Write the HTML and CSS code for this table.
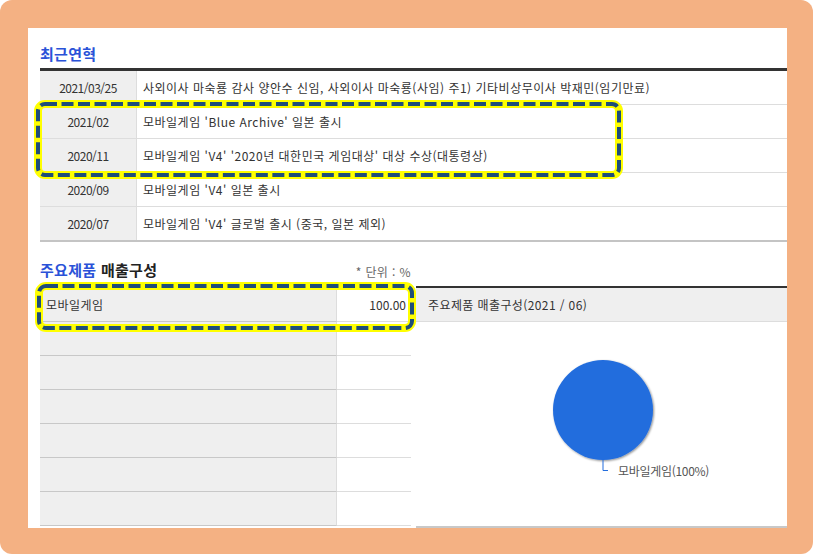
FILE: index.html
```html
<!DOCTYPE html>
<html lang="ko">
<head>
<meta charset="utf-8">
<title>최근연혁</title>
<link rel="stylesheet" href="styles.css">
</head>
<body>
<div class="frame">
  <div class="page">
    <div class="content">
      <h2 class="title">최근연혁</h2>
      <div class="hist">
        <div class="hrow"><div class="date">2021/03/25</div><div class="desc">사외이사 마숙룡 감사 양안수 신임, 사외이사 마숙룡(사임) 주1) 기타비상무이사 박재민(임기만료)</div></div>
        <div class="hrow"><div class="date">2021/02</div><div class="desc">모바일게임 'Blue Archive' 일본 출시</div></div>
        <div class="hrow"><div class="date">2020/11</div><div class="desc">모바일게임 'V4' '2020년 대한민국 게임대상' 대상 수상(대통령상)</div></div>
        <div class="hrow"><div class="date">2020/09</div><div class="desc">모바일게임 'V4' 일본 출시</div></div>
        <div class="hrow last"><div class="date">2020/07</div><div class="desc">모바일게임 'V4' 글로벌 출시 (중국, 일본 제외)</div></div>
      </div>

      <div class="sec2">
        <div class="left">
          <div class="sec2-head">
            <h2 class="title2"><span class="blue">주요제품</span> <span class="dark">매출구성</span></h2>
            <span class="unit">* 단위 : %</span>
          </div>
          <div class="ltable">
            <div class="lrow"><div class="lname">모바일게임</div><div class="lval">100.00</div></div>
            <div class="lrow"><div class="lname"></div><div class="lval"></div></div>
            <div class="lrow"><div class="lname"></div><div class="lval"></div></div>
            <div class="lrow"><div class="lname"></div><div class="lval"></div></div>
            <div class="lrow"><div class="lname"></div><div class="lval"></div></div>
            <div class="lrow"><div class="lname"></div><div class="lval"></div></div>
            <div class="lrow"><div class="lname"></div><div class="lval"></div></div>
          </div>
        </div>
        <div class="right">
          <div class="rhead">주요제품 매출구성(2021 / 06)</div>
          <div class="rbody">
            <svg class="chart" width="374" height="204" viewBox="0 0 374 204">
              <defs>
                <filter id="sh" x="-20%" y="-20%" width="140%" height="140%">
                  <feDropShadow dx="1" dy="1" stdDeviation="1.2" flood-color="#000" flood-opacity="0.45"/>
                </filter>
              </defs>
              <circle cx="187" cy="88" r="50" fill="#236ddd" filter="url(#sh)"/>
              <path d="M187 138 V148.5 H192" fill="none" stroke="#236ddd" stroke-width="1"/>
              <text x="202" y="154" class="lbl">모바일게임(100%)</text>
            </svg>
          </div>
        </div>
      </div>
    </div>

    <svg class="hl hl1" width="589" height="79" viewBox="0 0 589 79">
      <rect x="4" y="4" width="581" height="71" rx="7" class="hl-y"/>
      <rect x="4" y="4" width="581" height="71" rx="7" class="hl-b"/>
    </svg>
    <svg class="hl hl2" width="381" height="50" viewBox="0 0 381 50">
      <rect x="4" y="4" width="373" height="42" rx="7" class="hl-y"/>
      <rect x="4" y="4" width="373" height="42" rx="7" class="hl-b"/>
    </svg>
  </div>
</div>
</body>
</html>
```

FILE: styles.css
```css
body {
  margin: 0;
  background: #fff;
  font-family: "Noto Sans CJK KR", "Noto Sans", sans-serif;
}
.frame {
  width: 813px;
  height: 554px;
  box-sizing: border-box;
  background: #f4b183;
  border-radius: 12px;
  padding: 28px 26px 26px 28px;
}
.page {
  position: relative;
  width: 759px;
  height: 500px;
  box-sizing: border-box;
  background: #fff;
  overflow: hidden;
  padding: 16px 0 0 12px;
}
.content {
  width: 750px;
}
.title {
  margin: 0 0 4px;
  font-size: 15px;
  line-height: 20px;
  font-weight: 700;
  color: #2a52d8;
  letter-spacing: 0.3px;
}
.hist {
  border-top: 3px solid #333;
}
.hrow {
  display: flex;
  height: 33px;
  border-bottom: 1px solid #ddd;
  font-size: 12px;
  color: #333;
}
.hrow.last {
  border-bottom: 2px solid #c4c4c4;
}
.date {
  width: 96px;
  flex: none;
  background: #efefef;
  border-right: 1px solid #ddd;
  display: flex;
  align-items: center;
  justify-content: center;
  letter-spacing: -0.5px;
}
.desc {
  padding-left: 6px;
  display: flex;
  align-items: center;
  white-space: nowrap;
  letter-spacing: 0.5px;
}
.sec2 {
  display: flex;
  align-items: flex-start;
  gap: 5px;
  margin-top: 18px;
}
.left {
  width: 371px;
}
.sec2-head {
  display: flex;
  justify-content: space-between;
  align-items: flex-end;
  height: 20px;
  margin-bottom: 6px;
}
.title2 {
  margin: 0;
  font-size: 15px;
  line-height: 20px;
  font-weight: 700;
  letter-spacing: 0.3px;
}
.blue { color: #2a52d8; }
.dark { color: #222; }
.unit {
  font-size: 12px;
  line-height: 14px;
  color: #666;
  margin-bottom: 1px;
  letter-spacing: 0.4px;
}
.ltable {
  border-top: 2px solid #333;
}
.lrow {
  display: flex;
  height: 34px;
  font-size: 12px;
  color: #333;
}
.lname {
  width: 297px;
  flex: none;
  box-sizing: border-box;
  background: #efefef;
  border-right: 1px solid #ddd;
  border-bottom: 1px solid #c8c8c8;
  padding-left: 6px;
  display: flex;
  align-items: center;
  letter-spacing: 0.45px;
}
.lval {
  flex: 1;
  border-bottom: 1px solid #ddd;
  padding-right: 5px;
  display: flex;
  align-items: center;
  justify-content: flex-end;
}
.right {
  width: 374px;
  flex: none;
  margin-top: 26px;
}
.rhead {
  border-top: 2px solid #333;
  border-bottom: 1px solid #ddd;
  background: #efefef;
  height: 33px;
  padding-left: 12px;
  display: flex;
  align-items: center;
  font-size: 12px;
  color: #333;
  letter-spacing: 0.4px;
}
.rbody {
  height: 204px;
  border-bottom: 2px solid #c8c8c8;
}
.chart {
  display: block;
}
.lbl {
  font-family: "Noto Sans CJK KR", "Noto Sans", sans-serif;
  font-size: 12px;
  fill: #555;
  letter-spacing: -0.3px;
}
.hl {
  position: absolute;
  overflow: visible;
}
.hl1 { left: 6px; top: 72px; }
.hl2 { left: 7px; top: 254px; }
.hl-y {
  fill: none;
  stroke: #ffff00;
  stroke-width: 8;
}
.hl-b {
  fill: none;
  stroke: #1f4e79;
  stroke-width: 4;
  stroke-dasharray: 12 4.5;
}
```
